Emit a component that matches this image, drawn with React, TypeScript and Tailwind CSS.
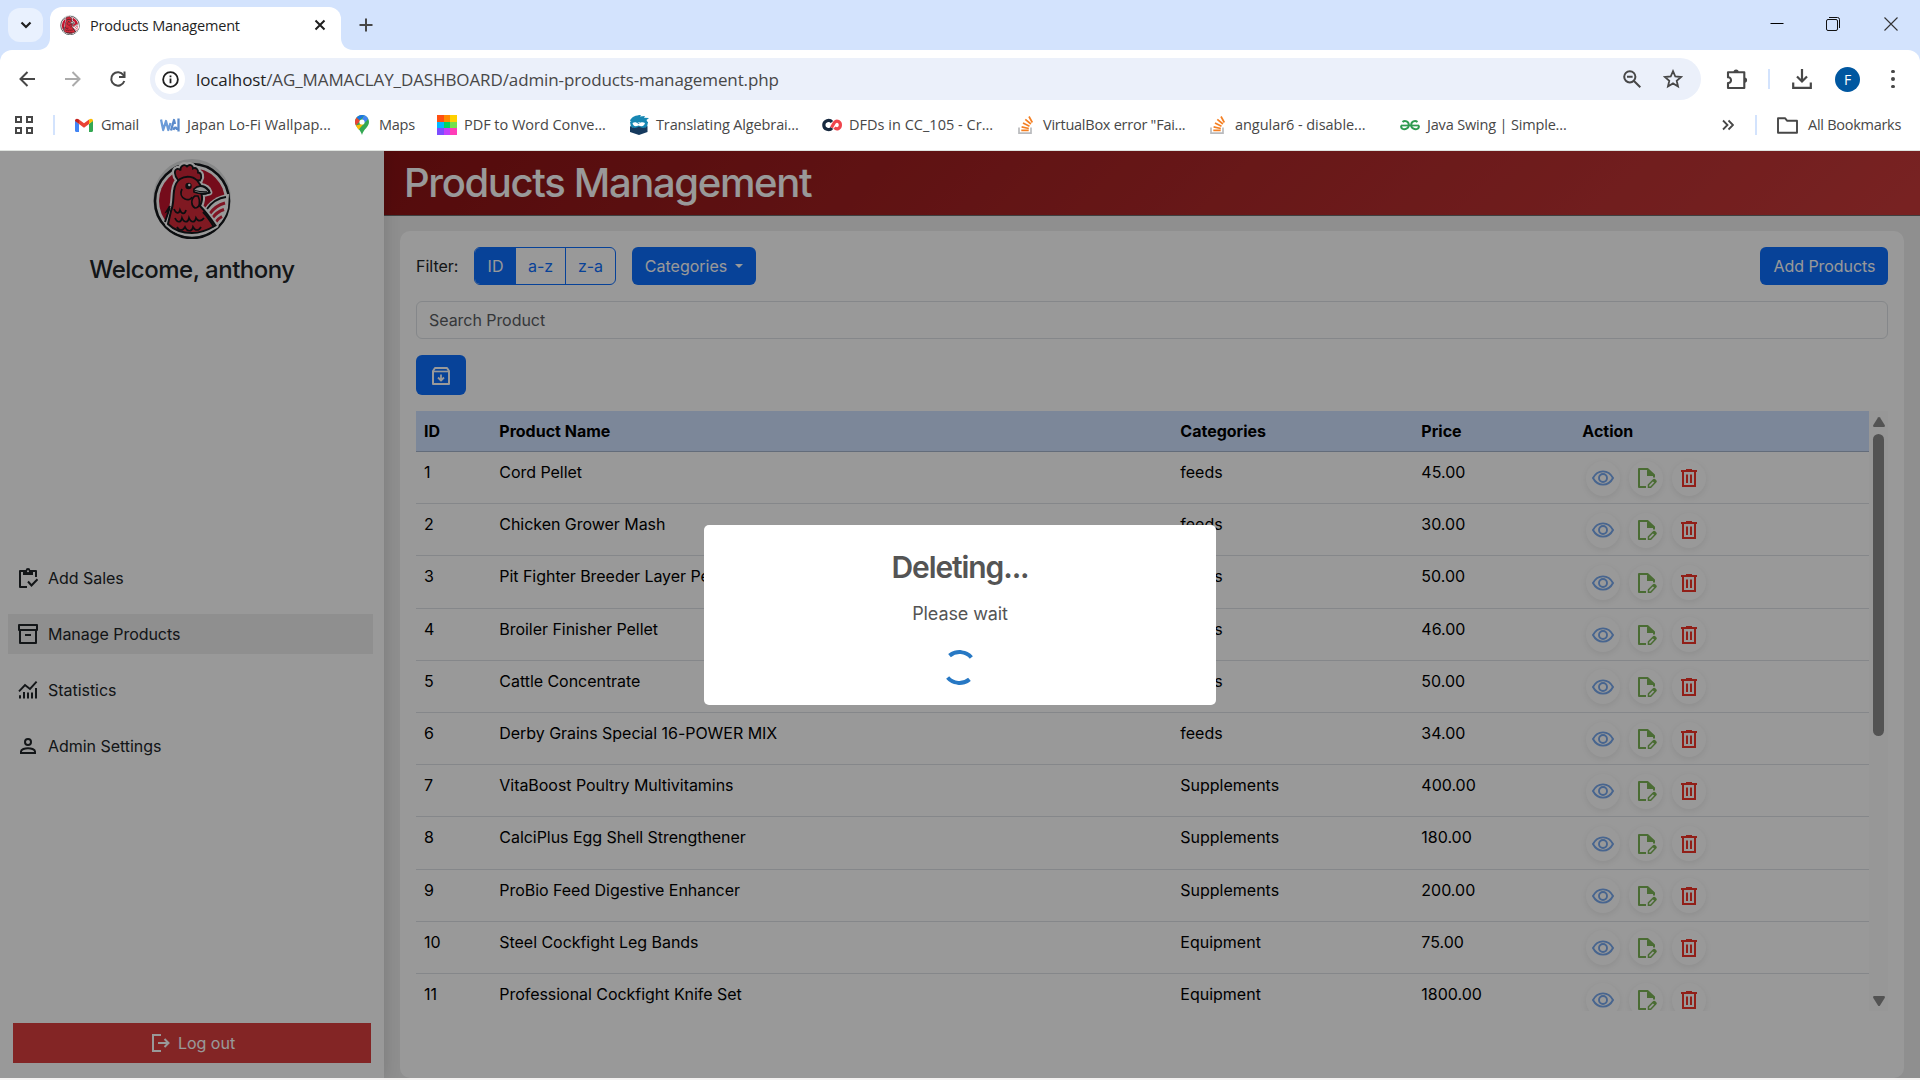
import React from "react";

type IconProps = { className?: string };

const products = [
  ["1", "Cord Pellet", "feeds", "45.00"],
  ["2", "Chicken Grower Mash", "feeds", "30.00"],
  ["3", "Pit Fighter Breeder Layer Pellet", "feeds", "50.00"],
  ["4", "Broiler Finisher Pellet", "feeds", "46.00"],
  ["5", "Cattle Concentrate", "feeds", "50.00"],
  ["6", "Derby Grains Special 16-POWER MIX", "feeds", "34.00"],
  ["7", "VitaBoost Poultry Multivitamins", "Supplements", "400.00"],
  ["8", "CalciPlus Egg Shell Strengthener", "Supplements", "180.00"],
  ["9", "ProBio Feed Digestive Enhancer", "Supplements", "200.00"],
  ["10", "Steel Cockfight Leg Bands", "Equipment", "75.00"],
  ["11", "Professional Cockfight Knife Set", "Equipment", "1800.00"],
];

const comb = "M25 21c-4-5-4-10-1-11 2-.3 3 .5 3.500 1.500C27 7 31 4.500 34 7.500c3-3 6-1 6 2 3-1.500 5.500 1 5 4 3 0 4.500 4 2 8z";
const bird = "M27 20c6-4 15-3 19 4l2 3c4 0 8 3 8.500 6.500-3 1-5.500 1.500-8 1.500 1.500 5 0 9-1.500 12 6 6 11 13 15.500 19.500C55 71 47 74 39 74c-9 0-18-3-24-9l3-13c3-7 2-14 3-20 .7-6 2.500-9.500 6-12z";

function Rooster({ className }: IconProps) {
  return (
    <svg viewBox="0 0 78 80" className={className}>
      <ellipse cx="39" cy="40" rx="39" ry="40" fill="#dfe1e2" />
      <circle cx="39" cy="42" r="37" fill="#fff" stroke="#15181c" strokeWidth="2.600" />
      <circle cx="39" cy="42" r="33" fill="#c3142e" />
      {/* tail feathers */}
      <path d="M50 52c6-10 14-16 26-17l-1 14c-2 8-6 14-13 20z" fill="#fff" />
      <path d="M54 50c5-7 11-11 19-12" fill="none" stroke="#15181c" strokeWidth="1.800" />
      <path d="M57 54.500c4-6 8-8.500 15-10.500M59.500 59c3-4.500 7-7 11.500-8.500M62 64c2.500-4 4-5 7-6.500" fill="none" stroke="#d4243c" strokeWidth="3" />
      {/* white halo, then the comb and the bird */}
      <path d={comb} fill="#fff" stroke="#fff" strokeWidth="6" strokeLinejoin="round" />
      <path d={bird} fill="#fff" stroke="#fff" strokeWidth="6" strokeLinejoin="round" />
      <path d={comb} fill="#cf2638" stroke="#15181c" strokeWidth="1.800" />
      <path d={bird} fill="#d62a3a" stroke="#15181c" strokeWidth="2" />
      <path d="M41 30c5-5 12-3 15.500 3.500-6 2-10.500 1.500-15.500-.5z" fill="#eef0f0" stroke="#15181c" strokeWidth="1.700" />
      <path d="M42 31.500c5 1.500 8 1.500 12 1.300" stroke="#15181c" strokeWidth="1.300" fill="none" />
      <circle cx="35.500" cy="27" r="3.200" fill="#15181c" />
      <circle cx="36.300" cy="26" r="1.200" fill="#fff" />
      <path d="M29 30c-2 4-1 8 3 10 3 1.500 6 .5 7-2" fill="none" stroke="#15181c" strokeWidth="1.700" />
      <path d="M42 37c-4.500 3-4 10 0 12 4.500 0 6-6 3-12z" fill="#de3347" stroke="#15181c" strokeWidth="1.600" />
      <path d="M21 50c2 5 5 5 6 1 2 5 5 4 6 0M22 59c2 5 6 5 7 0 2 5 6 5 7 0 2 5 6 5 7 0 2 4 6 3 8 0M24 68c2 4 6 4 8 0 2 5 7 5 8 0 2 4 6 4 8 0" fill="none" stroke="#15181c" strokeWidth="1.700" />
      <path d="M17 47l-3 5 2-1-4 12M50 53c5 5 8 10 11 15" fill="none" stroke="#15181c" strokeWidth="2" />
    </svg>
  );
}

function TaskIcon() {
  return (
    <svg viewBox="0 0 20 20" className="size-5" fill="none" stroke="currentColor" strokeWidth="2">
      <path d="M9 19H2V3h16v6" strokeLinejoin="round" />
      <path d="M5 2h10v5H5z" fill="currentColor" stroke="none" />
      <circle cx="10" cy="2.300" r="2.300" fill="currentColor" stroke="none" />
      <circle cx="10" cy="3.300" r="1" fill="#fff" stroke="none" />
      <path d="M10 13.500l3.500 4 6-6.300" />
    </svg>
  );
}
function ArchiveIcon() {
  return (
    <svg viewBox="0 0 20 20" className="size-5" fill="none" stroke="currentColor" strokeWidth="2" strokeLinejoin="round">
      <path d="M1 1h18v5H1zM2 6v13h16V6M7 11h6" />
    </svg>
  );
}
function StatsIcon() {
  return (
    <svg viewBox="0 0 20 20" className="size-5" fill="none" stroke="currentColor" strokeWidth="2">
      <path d="M1 11.300l6-6.300 5 4 6.600-7.300" strokeWidth="1.900" />
      <path d="M2 18.500v-3.300M6 18.500v-6.500M10 18.500v-6M14 18.500v-6M18 18.500V8" />
    </svg>
  );
}
function PersonIcon() {
  return (
    <svg viewBox="0 0 20 20" className="size-5" fill="none" stroke="currentColor" strokeWidth="2">
      <circle cx="10" cy="6" r="3" />
      <path d="M3 17v-1.600c0-2 4-3.200 7-3.200s7 1.200 7 3.200V17z" />
    </svg>
  );
}

const menu = [
  { label: "Add Sales", Icon: TaskIcon, active: false },
  { label: "Manage Products", Icon: ArchiveIcon, active: true },
  { label: "Statistics", Icon: StatsIcon, active: false },
  { label: "Admin Settings", Icon: PersonIcon, active: false },
];

function EyeIcon() {
  return (
    <svg viewBox="0 0 22 16" className="h-4 w-[22px]" fill="none" stroke="#78a9ee" strokeWidth="1.900">
      <path d="M1 8C3.200 3.800 6.700 1.400 11 1.400S18.800 3.800 21 8C18.800 12.200 15.300 14.600 11 14.600S3.200 12.200 1 8z" />
      <circle cx="11" cy="8" r="4" />
    </svg>
  );
}
function FileEditIcon() {
  return (
    <svg viewBox="0 0 20 20" className="ml-px size-5" fill="none" stroke="#7cb456" strokeWidth="2">
      <path d="M9 19H2V1h8.500L17 7v2.500" strokeLinejoin="round" />
      <path d="M10 1.500v6.500h7.500z" fill="#7cb456" stroke="none" />
      <path d="M11.500 19.200v-2.400l5-5c.9-.9 3.200 1.200 2.200 2.200l-5 5.200z" strokeWidth="1.500" />
      <path d="M15.200 12.800l2.600 2.500 1.700-2-2.300-2.200z" fill="#7cb456" stroke="none" />
    </svg>
  );
}
function TrashIcon() {
  return (
    <svg viewBox="0 0 16 18" className="h-[18px] w-4" fill="none" stroke="#f23528" strokeWidth="2">
      <path d="M0 2h16" />
      <path d="M5 1h6" />
      <path d="M2 2v15h12V2" />
      <path d="M6 5.500v8.500M10 5.500v8.500" />
    </svg>
  );
}

function GmailIcon() {
  return (
    <svg viewBox="0 0 20 20" className="size-5">
      <path d="M1 5.500v10.300c0 .7.500 1.200 1.200 1.200H5V9z" fill="#4285f4" />
      <path d="M19 5.500v10.300c0 .7-.5 1.200-1.200 1.200H15V9z" fill="#34a853" />
      <path d="M5 9V4.500l5 3.800 5-3.800V9l-5 3.800z" fill="#ea4335" />
      <path d="M1 5.700C1 3.500 3.300 3 5 4.500V9L1 6z" fill="#c5221f" />
      <path d="M19 5.700c0-2.200-2.300-2.700-4-1.200V9l4-3z" fill="#fbbc04" />
    </svg>
  );
}
function WallpaperIcon() {
  return (
    <svg viewBox="0 0 20 20" className="size-5" fill="none" strokeWidth="2.300" strokeLinejoin="round">
      <path d="M1 4.500l2.200 10.500L6 6l2.300 9 2.200-7" stroke="#6b9bd8" />
      <path d="M11 15.500l3-10.500 1 4M18.500 3.500v13" stroke="#5b8bcb" />
      <path d="M13.500 15c.5-3 3.500-3 3.500 0" stroke="#5b8bcb" />
    </svg>
  );
}
function MapsIcon() {
  return (
    <svg viewBox="0 0 20 20" className="size-5">
      <path d="M10 0c4 0 7 3 7 7 0 5-5.500 7-7 13-1.500-6-7-8-7-13 0-4 3-7 7-7z" fill="#34a853" />
      <path d="M3 7c0-1.700.6-3.200 1.700-4.500L8.200 6 3.900 10.600C3.300 9.500 3 8.300 3 7z" fill="#ea4335" />
      <path d="M4.700 2.500C6 .9 7.900 0 10 0c.8 0 1.500.1 2.200.3L7.500 5z" fill="#1a73e8" />
      <path d="M12.200.3c1.800.6 3.200 1.900 4 3.600L12.500 8 10 4z" fill="#4285f4" />
      <path d="M3.900 10.600L12 8.500l-5.500 6.300c-1-1.500-2-2.700-2.600-4.200z" fill="#fbbc04" />
      <circle cx="10" cy="7" r="2.600" fill="#fff" />
    </svg>
  );
}
const pdfColors = [
  "bg-[#ff4f12]", "bg-[#ff8a00]", "bg-[#ffd000]",
  "bg-[#00b8ff]", "bg-[#00d563]", "bg-[#74e04d]",
  "bg-[#7c4dff]", "bg-[#c040fb]", "bg-[#ff3db8]",
];
function PdfIcon() {
  return (
    <span className="grid size-5 grid-cols-3 grid-rows-3">
      {pdfColors.map((c) => (
        <span key={c} className={c} />
      ))}
    </span>
  );
}
function OwlIcon() {
  return (
    <svg viewBox="0 0 20 20" className="size-5">
      <path d="M1 6C2 2 7 0 12 0l-1 1.500L16 1l-1 1.700L20 3l-2.500 2L19 8l-7-1-8 1z" fill="#1787b3" />
      <path d="M1 7l5-1 4 2 4-2 5 1-1 5-4 2-4-2-4 2-4-2z" fill="#1787b3" />
      <path d="M3.500 8c2-1.500 4-1 6 1 2-2 4.500-2.500 6.500-1-.5 3-3 4-6.500 2.500C6 12 4 11 3.500 8z" fill="#fff" />
      <path d="M1 11c3 2.500 6 2.500 9 .5 3 2 6 2 8.500-.5v6L10 20l-9-3z" fill="#153a5e" />
    </svg>
  );
}
function CreatelyIcon() {
  return (
    <svg viewBox="0 0 20 20" className="size-5" fill="none" strokeWidth="3.200">
      <path d="M10 7C7.500 4 1.800 5.500 1.800 10S7.500 16 10 13" stroke="#17293f" />
      <path d="M9.500 12.500l3-5C15 4.500 18.400 7 18.400 10s-3.400 5.500-5.900 2.500" stroke="#f0444c" />
    </svg>
  );
}
function StackOverflowIcon() {
  return (
    <svg viewBox="0 0 20 20" className="size-5" fill="none">
      <path d="M3 12.500V18.200h12V12.500" stroke="#b9babd" strokeWidth="1.700" />
      <path d="M5.300 15.300h7.400M5.600 11.900l7.200 1.600M7 8l6.500 3.300M9.300 4.300l5.600 4.700M13 1.500l3.300 6" stroke="#f48024" strokeWidth="1.700" />
    </svg>
  );
}
function GfgIcon() {
  return (
    <svg viewBox="0 0 20 20" className="size-5" fill="none" stroke="#2f9b50" strokeWidth="2">
      <path d="M1 10.500h18" strokeWidth="1.700" />
      <path d="M2.500 7C5 4.800 8.800 6.500 8.800 10S5 15.200 2 13.500c-.7-.8-1-1.800-1-3" />
      <path d="M17.500 7C15 4.800 11.200 6.500 11.200 10s3.800 5.200 6.800 3.500c.7-.8 1-1.800 1-3" />
    </svg>
  );
}

const bookmarks = [
  { label: "Gmail", Icon: GmailIcon, w: "w-[86px]", t: "tracking-[-0.3px]" },
  { label: "Japan Lo-Fi Wallpap...", Icon: WallpaperIcon, w: "w-[192px]", t: "tracking-[0.02px]" },
  { label: "Maps", Icon: MapsIcon, w: "w-[85px]", t: "tracking-[-0.25px]" },
  { label: "PDF to Word Conve...", Icon: PdfIcon, w: "w-[192px]", t: "tracking-[-0.03px]" },
  { label: "Translating Algebrai...", Icon: OwlIcon, w: "w-[193px]", t: "tracking-[-0.13px]" },
  { label: "DFDs in CC_105 - Cr...", Icon: CreatelyIcon, w: "w-[194px]", t: "tracking-[0.02px]" },
  { label: 'VirtualBox error "Fai...', Icon: StackOverflowIcon, w: "w-[192px]", t: "tracking-[-0.25px]" },
  { label: "angular6 - disable...", Icon: StackOverflowIcon, w: "w-[192px]", t: "tracking-[-0.05px]" },
  { label: "Java Swing | Simple...", Icon: GfgIcon, w: "w-[180px]", t: "tracking-[-0.17px]" },
];

function TabStrip() {
  return (
    <div className="flex h-[50px] items-start bg-[#d3e3fd]">
      <div className="mt-2 ml-2 flex h-[34px] w-[35px] items-center justify-center rounded-xl bg-[#e9f1fe]">
        <svg viewBox="0 0 12 12" className="size-3" fill="none" stroke="#1f1f1f" strokeWidth="2.200">
          <path d="M1.500 3.500L6 8l4.500-4.500" />
        </svg>
      </div>
      <svg viewBox="0 0 12 12" className="mt-[38px] -ml-[5px] size-3" fill="#fff">
        <path d="M12 0v12H0C7 12 12 7 12 0z" />
      </svg>
      <div className="mt-[7px] flex h-[43px] w-[291px] items-center rounded-t-xl bg-white pr-[13px] pl-[10px]">
        <Rooster className="-mt-[7px] size-5" />
        <span className="-mt-[6px] ml-[10px] flex-1 text-[14.500px] tracking-[-0.2px] whitespace-nowrap text-[#1f1f1f]">Products Management</span>
        <svg viewBox="0 0 12 12" className="-mt-[7px] mr-[2px] size-3" stroke="#1f1f1f" strokeWidth="2">
          <path d="M1.500 1.500l9 9M10.500 1.500l-9 9" />
        </svg>
      </div>
      <svg viewBox="0 0 12 12" className="mt-[38px] size-3" fill="#fff">
        <path d="M0 0v12h12C5 12 0 7 0 0z" />
      </svg>
      <svg viewBox="0 0 14 14" className="mt-[18px] ml-[6px] size-[14px]" stroke="#474747" strokeWidth="2">
        <path d="M7 .5v13M.5 7h13" />
      </svg>
      <div className="mt-[17px] ml-auto flex items-center">
        <svg viewBox="0 0 14 14" className="mr-[42px] size-[14px]" stroke="#000" strokeWidth="1">
          <path d="M.5 6.500h13" />
        </svg>
        <svg viewBox="0 0 14 14" className="mr-[44px] size-[14px]" fill="none" stroke="#111" strokeWidth="1">
          <rect x=".5" y="2.500" width="11" height="11" rx="1.500" />
          <path d="M3 .5h8.500a2 2 0 012 2V11" />
        </svg>
        <svg viewBox="0 0 14 14" className="mr-[22px] size-[14px]" stroke="#333" strokeWidth="1.100">
          <path d="M.5.500l13 13M13.500.500l-13 13" />
        </svg>
      </div>
    </div>
  );
}

function Toolbar() {
  return (
    <div className="flex h-[50px] items-center rounded-t-xl bg-white pt-2 pl-[19px]">
      <svg viewBox="0 0 18 18" className="size-[18px]" fill="none" stroke="#474747" strokeWidth="2">
        <path d="M16 9H2M8.500 2L1.500 9l7 7" />
      </svg>
      <svg viewBox="0 0 18 18" className="ml-[26px] size-[18px]" fill="none" stroke="#ababab" strokeWidth="2">
        <path d="M2 9h14M9.500 2l7 7-7 7" />
      </svg>
      <svg viewBox="0 0 18 18" className="ml-[28px] size-[18px]" fill="none" stroke="#474747" strokeWidth="2">
        <path d="M15.300 11A6.700 6.700 0 1114.500 5.200l1 1.300" />
        <path d="M15.500 1.500v5.500h-5.500" />
      </svg>
      <div className="ml-[23px] flex h-[42px] w-[1551px] items-center rounded-full bg-[#ebf0fa] pl-[5px]">
        <span className="flex size-[30px] items-center justify-center rounded-full bg-white">
          <svg viewBox="0 0 18 18" className="size-[17px]" fill="none" stroke="#1f1f1f" strokeWidth="1.900">
            <circle cx="9" cy="9" r="7.800" />
            <path d="M9 8v5M9 4.700v1.900" />
          </svg>
        </span>
        <span className="ml-[11px] pt-px text-[17px] tracking-[-0.11px] whitespace-nowrap text-[#474747]">
          <span className="text-[#1f1f1f]">localhost</span>/AG_MAMACLAY_DASHBOARD/admin-products-management.php
        </span>
        <svg viewBox="0 0 18 18" className="mr-[22px] ml-auto size-[18px]" fill="none" stroke="#474747" strokeWidth="2">
          <circle cx="6.800" cy="6.800" r="5.600" />
          <path d="M11 11l6.300 6.300M4 6.800h5.600" />
        </svg>
        <svg viewBox="0 0 20 20" className="mr-[18px] size-5" fill="none" stroke="#474747" strokeWidth="1.800">
          <path d="M10 2.200l2.300 5.300 5.800.5-4.400 3.800 1.300 5.600-5-3-5 3 1.300-5.600L1.900 8l5.800-.5z" />
        </svg>
      </div>
      <svg viewBox="0 0 22 22" className="ml-[25px] size-[22px]" fill="none" stroke="#474747" strokeWidth="2.100" strokeLinejoin="round">
        <path d="M2 4.200h16.300V20H2v-5c4 .3 4-6 0-5.700z" />
        <path d="M7.500 4a2.600 2.600 0 015.200 0zM18.500 9.500a2.600 2.600 0 010 5.200z" fill="#474747" stroke="none" />
      </svg>
      <span className="ml-[20px] h-5 w-[2px] bg-[#d3e3fd]" />
      <svg viewBox="0 0 20 20" className="ml-[22px] size-5" fill="none" stroke="#474747" strokeWidth="2.200">
        <path d="M10 0v12M5 7.500l5 5 5-5M1.200 13.500v5.300h17.600v-5.300" />
      </svg>
      <span className="ml-[23px] flex size-[25px] items-center justify-center rounded-full bg-[#0057a0] text-[14px] text-white">F</span>
      <span className="ml-[31px] flex flex-col gap-1">
        <span className="size-[3.500px] rounded-full bg-[#474747]" />
        <span className="size-[3.500px] rounded-full bg-[#474747]" />
        <span className="size-[3.500px] rounded-full bg-[#474747]" />
      </span>
    </div>
  );
}

function BookmarksBar() {
  return (
    <div className="flex h-[50px] items-center bg-white pl-[15px] text-[14.500px] text-[#474747]">
      <svg viewBox="0 0 18 18" className="size-[18px]" fill="none" stroke="#474747" strokeWidth="2">
        <path d="M1 1h5v5H1zM12 1h5v5h-5zM1 12h5v5H1zM12 12h5v5h-5z" />
      </svg>
      <span className="mr-[19px] ml-[20px] h-5 w-[2px] bg-[#d3e3fd]" />
      {bookmarks.map(({ label, Icon, w, t }) => (
        <div key={label} className={`flex shrink-0 items-center gap-[7px] whitespace-nowrap ${w} ${t}`}>
          <Icon />
          <span>{label}</span>
        </div>
      ))}
      <svg viewBox="0 0 12 12" className="ml-auto size-3" fill="none" stroke="#474747" strokeWidth="1.800">
        <path d="M1 1.500L5.500 6 1 10.500M6.500 1.500L11 6l-4.500 4.500" />
      </svg>
      <span className="ml-[21px] h-5 w-[2px] bg-[#d3e3fd]" />
      <svg viewBox="0 0 21 17" className="ml-5 h-[17px] w-[21px]" fill="none" stroke="#474747" strokeWidth="1.900" strokeLinejoin="round">
        <path d="M1 1.200h7l2 2.500h10v12H1z" />
      </svg>
      <span className="mr-[18px] ml-[10px] w-[94px] tracking-[-0.27px] whitespace-nowrap">All Bookmarks</span>
    </div>
  );
}

function Sidebar() {
  return (
    <aside className="relative flex w-[384px] shrink-0 flex-col bg-white shadow-[0_0_16px_rgba(0,0,0,0.15)]">
      <div className="flex h-[304px] shrink-0 flex-col items-center pt-2">
        <Rooster className="h-20 w-[78px]" />
        <h4 className="mt-4 text-2xl leading-[29px] font-[450] tracking-[-0.5px] text-[#212529]">Welcome, anthony</h4>
      </div>
      <nav className="mt-[103px] flex flex-col gap-4 pr-[11px] pl-2">
        {menu.map(({ label, Icon, active }) => (
          <div key={label} className={`flex h-10 items-center gap-[10px] pl-[10px] text-[#212529] ${active ? "bg-[#eeeeee]" : ""}`}>
            <Icon />
            <span className="tracking-[-0.04px]">{label}</span>
          </div>
        ))}
      </nav>
      <button className="mt-auto mr-[13px] mb-[15px] ml-[13px] flex h-10 items-center justify-center gap-2 bg-[#da3f3f] pl-[3px] text-white">
        <svg viewBox="0 0 18 18" className="size-[18px]" fill="none" stroke="currentColor" strokeWidth="2">
          <path d="M9 1H1v16h8M6 9h10.500M12.500 5l4 4-4 4" />
        </svg>
        <span>Log out</span>
      </button>
    </aside>
  );
}

const round = "flex h-[35px] w-[34px] items-center justify-center rounded-full bg-white shadow-[0_2px_6px_rgba(0,0,0,0.08)]";
const columns = "grid grid-cols-[75.300px_681px_241px_161px_1fr] pl-2";

function ProductTable() {
  return (
    <div className="mt-4 flex h-[600px] overflow-hidden text-black">
      <div className="h-[640px] w-[1453px]">
        <div className={`${columns} h-[41px] items-center border-b border-[#a6b5cc] bg-[#cfe2ff] font-bold`}>
          <span>ID</span>
          <span>Product Name</span>
          <span>Categories</span>
          <span>Price</span>
          <span>Action</span>
        </div>
        {products.map(([id, name, category, price]) => (
          <div key={id} className={`${columns} h-[52.200px] border-b border-[#dee2e6] pt-2`}>
            <span>{id}</span>
            <span className="tracking-[-0.04px]">{name}</span>
            <span>{category}</span>
            <span>{price}</span>
            <span className="flex gap-[9px] pt-[0.700px] pl-1">
              <span className={round}><EyeIcon /></span>
              <span className={round}><FileEditIcon /></span>
              <span className={round}><TrashIcon /></span>
            </span>
          </div>
        ))}
      </div>
      <div className="flex w-[19px] flex-col items-center bg-[#fcfcfc] pt-[6px] pb-[5px]">
        <svg viewBox="0 0 12 10" className="h-[10px] w-3" fill="#8b8b8b">
          <path d="M6 0c.5 0 .8.300 1 .6l4.700 7.400c.6 1-.1 2-1 2H1.300c-.9 0-1.600-1-1-2L5 .6c.2-.3.500-.6 1-.6z" />
        </svg>
        <span className="mt-[7px] h-[302px] w-[11px] rounded-full bg-[#8b8b8b]" />
        <svg viewBox="0 0 12 10" className="mt-auto h-[10px] w-3 rotate-180" fill="#8b8b8b">
          <path d="M6 0c.5 0 .8.300 1 .6l4.700 7.400c.6 1-.1 2-1 2H1.300c-.9 0-1.600-1-1-2L5 .6c.2-.3.500-.6 1-.6z" />
        </svg>
      </div>
    </div>
  );
}

function Main() {
  return (
    <main className="flex min-w-0 flex-1 flex-col bg-[#eeeeee]">
      <header className="flex h-[65px] shrink-0 items-center border-b border-[#6c6c6c] bg-linear-[135deg,#8b1214,#c93a3a] pl-5">
        <h1 className="text-[40px] leading-none font-[450] tracking-[-1.35px] text-white">Products Management</h1>
      </header>
      <section className="mx-4 mt-[15px] flex-1 rounded-[10px] bg-white px-4 pt-4">
        <div className="flex items-center">
          <span className="w-[58px] text-[#212529]">Filter:</span>
          <div className="flex h-[38px] overflow-hidden rounded-md border border-[#0d6efd] text-[#0d6efd]">
            <span className="flex w-[41px] items-center justify-center bg-[#0d6efd] text-white">ID</span>
            <span className="flex w-[50px] items-center justify-center border-r border-[#0d6efd]">a-z</span>
            <span className="flex w-[49px] items-center justify-center">z-a</span>
          </div>
          <button className="ml-4 flex h-[38px] w-[124px] items-center justify-center gap-2 rounded-md bg-[#0d6efd] text-white">
            Categories
            <span className="size-0 border-x-[4.500px] border-t-[4.500px] border-x-transparent border-t-white" />
          </button>
          <button className="ml-auto h-[38px] w-32 rounded-md bg-[#0d6efd] pl-px tracking-[-0.05px] text-white">Add Products</button>
        </div>
        <div className="mt-4 flex h-[38px] items-center rounded-md border border-[#dee2e6] pl-3 tracking-[-0.05px] text-[#595c5f]">Search Product</div>
        <button className="mt-4 flex h-10 w-[50px] items-center justify-center rounded-md bg-[#0d6efd] pt-[2px] text-white">
          <svg viewBox="0 0 18 18" className="size-[18px]" fill="none" stroke="currentColor" strokeWidth="2" strokeLinejoin="round">
            <path d="M1 4l2-3h12l2 3v13H1z" />
            <path d="M1 4.500h16" strokeWidth="1.600" />
            <path d="M9 7.500v6M6 10.500l3 3 3-3" strokeWidth="1.800" />
          </svg>
        </button>
        <ProductTable />
      </section>
    </main>
  );
}

export default function App() {
  return (
    <div className="flex h-[1080px] w-[1920px] flex-col overflow-hidden bg-[#f4f2f1] font-['Inter',sans-serif] text-base">
      <div className="shrink-0 bg-[#d3e3fd] font-['Open_Sans','Noto_Sans',sans-serif]">
        <TabStrip />
        <Toolbar />
        <BookmarksBar />
        <div className="h-px bg-[#dfe3df]" />
      </div>
      <div className="relative flex h-[927px] overflow-hidden">
        <Sidebar />
        <Main />
        <div className="absolute inset-0 flex items-center justify-center bg-black/40">
          <div className="flex h-[180px] w-[512px] flex-col items-center rounded-[5px] bg-white pt-[24px] text-[#545454]">
            <h2 className="text-[30px] leading-9 font-semibold tracking-[-1.1px]">Deleting...</h2>
            <p className="mt-[15px] text-lg leading-[27px] tracking-[-0.1px]">Please wait</p>
            <span className="mt-[23px] mr-px size-[35px] rotate-[5deg] rounded-full border-4 border-x-transparent border-y-[#2778c4]" />
          </div>
        </div>
      </div>
    </div>
  );
}
